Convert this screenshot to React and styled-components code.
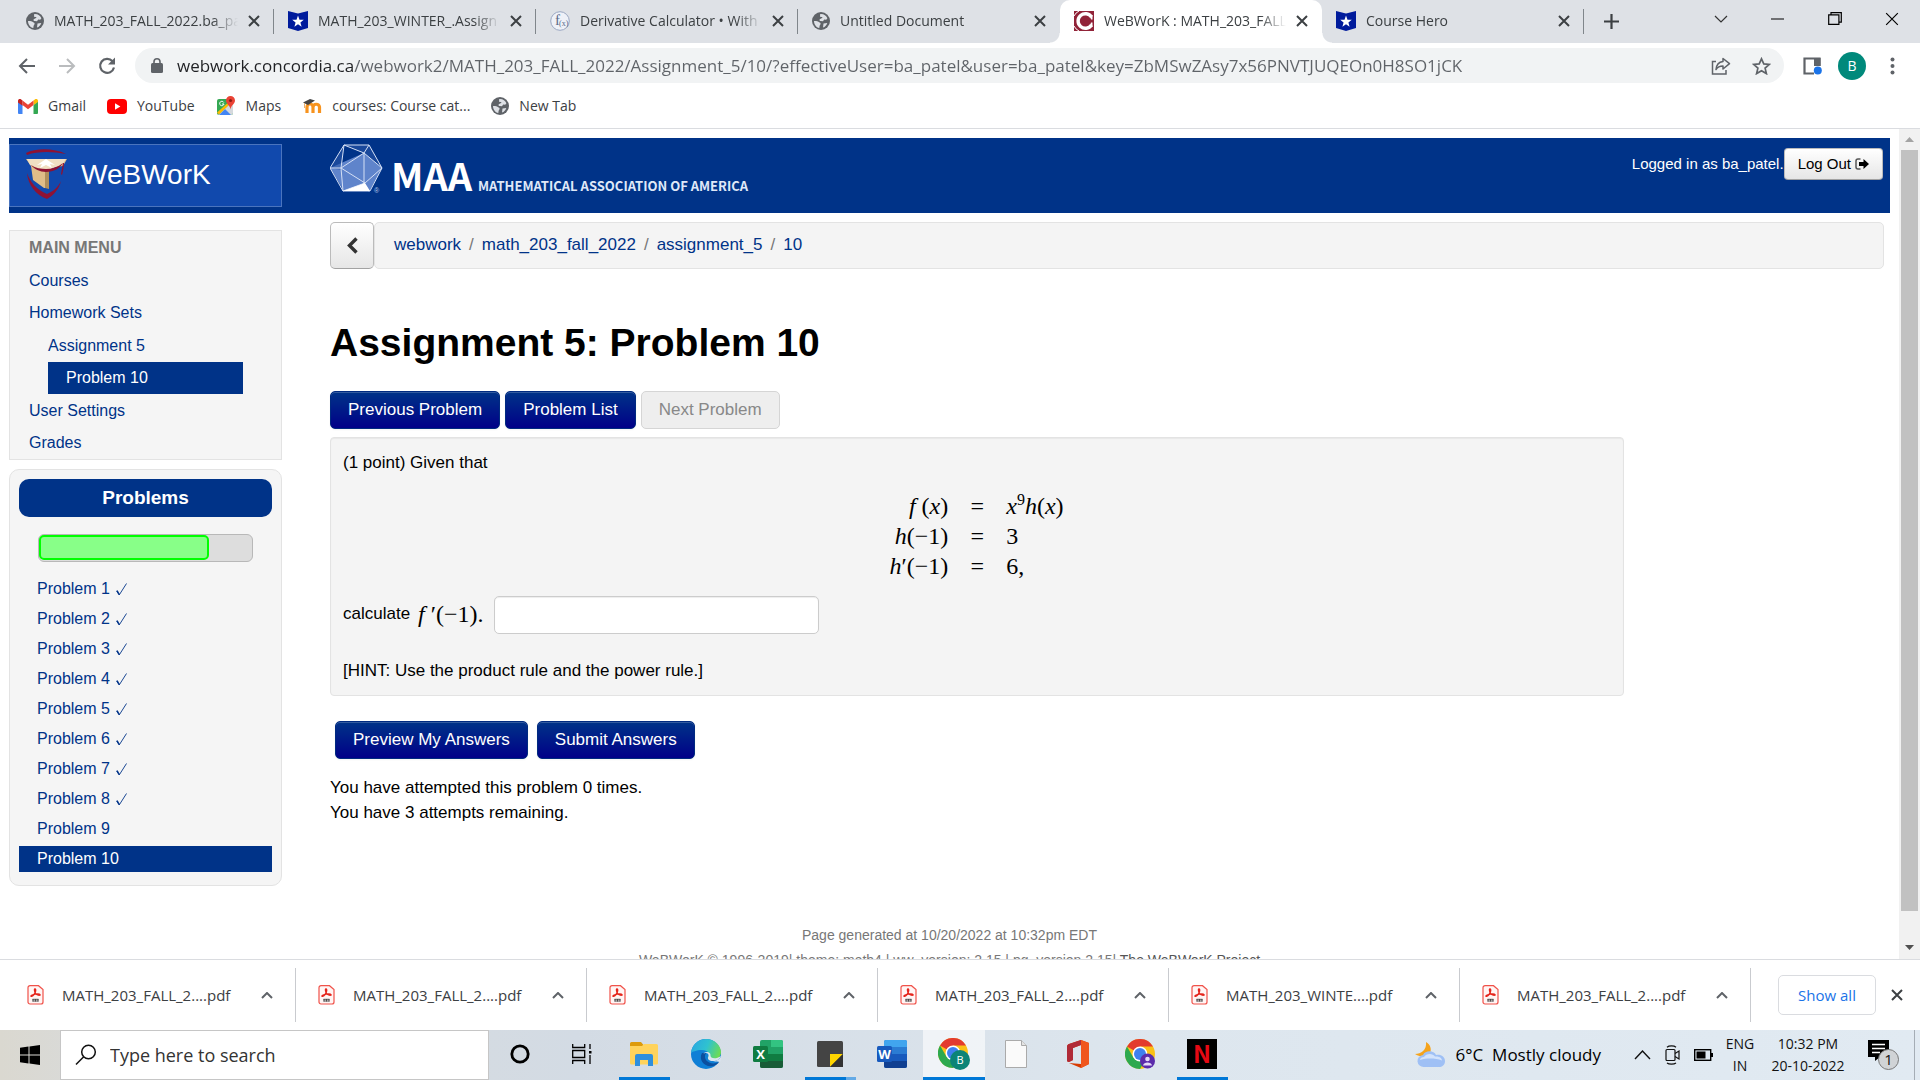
import React from "react";
import styled, { createGlobalStyle } from "styled-components";

const UI = `"Open Sans", "Noto Sans", sans-serif`;
const ARIAL = `"Liberation Sans", Arial, sans-serif`;
const SERIF = `"Liberation Serif", "Times New Roman", serif`;
const SLIM = `"Noto Sans CJK SC", "Noto Sans", sans-serif`;
const NAVY = "#003388";

const GlobalStyle = createGlobalStyle`
  *, *::before, *::after { box-sizing: border-box; }
  html, body, #root { height: 100%; margin: 0; }
  body { overflow: hidden; background: #fff; font-family: ${ARIAL}; color: #000; }
  button, input { font: inherit; margin: 0; }
  button { cursor: pointer; }
  a { text-decoration: none; color: inherit; }
  ul { list-style: none; margin: 0; padding: 0; }
  p, h1, h2 { margin: 0; }
  svg { display: block; flex: none; }
`;

const Desktop = styled.div`
  height: 100vh;
  display: flex;
  flex-direction: column;
`;

const IconButton = styled.button`
  border: 0;
  padding: 0;
  background: none;
  display: flex;
  align-items: center;
  justify-content: center;
  flex: none;
  width: ${(p) => p.$w || 40}px;
  height: ${(p) => p.$h || 36}px;
  color: ${(p) => p.$color || "#5f6368"};
`;

/* ---------- Tab strip ---------- */

const TabStrip = styled.div`
  height: 43px;
  flex: none;
  display: flex;
  background: #dee1e6;
  padding-left: 12px;
`;

const Tab = styled.div`
  width: 262px;
  display: flex;
  align-items: center;
  padding: 0 14px 2px;
  gap: 10px;
  position: relative;
  font: 14px/20px ${UI};
  color: #3c4043;
  background: ${(p) => (p.$active ? "#fff" : "transparent")};
  border-radius: ${(p) => (p.$active ? "10px 10px 0 0" : "0")};
  &::before {
    content: "";
    display: ${(p) => (p.$active ? "block" : "none")};
    position: absolute;
    left: -10px;
    right: -10px;
    bottom: 0;
    height: 10px;
    background:
      radial-gradient(circle at 0 0, transparent 9px, #fff 10px) left / 10px 10px no-repeat,
      radial-gradient(circle at 100% 0, transparent 9px, #fff 10px) right / 10px 10px no-repeat;
  }
  &::after {
    content: "";
    position: absolute;
    right: 0;
    top: 9px;
    width: 1px;
    height: 25px;
    background: ${(p) => (p.$divider ? "#80868b" : "transparent")};
  }
`;

const TabTitle = styled.span`
  flex: 1;
  min-width: 0;
  overflow: hidden;
  white-space: nowrap;
  mask-image: linear-gradient(to right, #000 calc(100% - 26px), transparent);
`;

const WindowControls = styled.div`
  margin-left: auto;
  display: flex;
  align-items: center;
  height: 37px;
`;

/* ---------- Toolbar ---------- */

const Toolbar = styled.div`
  height: 45px;
  flex: none;
  display: flex;
  align-items: center;
  padding: 0 8px 0 7px;
`;

const UrlBar = styled.div`
  flex: 1;
  height: 35px;
  margin: 0 8px;
  border-radius: 18px;
  background: #f1f3f4;
  display: flex;
  align-items: center;
  padding: 0 3px 0 16px;
  gap: 14px;
`;

const UrlInput = styled.input`
  flex: 1;
  min-width: 0;
  border: 0;
  padding: 0;
  outline: 0;
  font: 17px/24px ${UI};
  color: transparent;
  background: linear-gradient(to right, #202124 ${(p) => p.$host}px, #5f6368 ${(p) => p.$host}px);
  background-clip: text;
`;

const UrlActions = styled.div`
  display: flex;
`;

const Avatar = styled.span`
  width: 28px;
  height: 28px;
  border-radius: 50%;
  background: #00897b;
  color: #fff;
  font: 14px/28px ${UI};
  text-align: center;
`;

const BookmarkBar = styled.nav`
  height: 41px;
  flex: none;
  display: flex;
  align-items: center;
  padding: 0 18px 4px;
  gap: 21px;
  border-bottom: 1px solid #dadce0;
  font: 14px/20px ${UI};
  color: #3c4043;
`;

const Bookmark = styled.a`
  display: flex;
  align-items: center;
  gap: 10px;
`;

/* ---------- Page ---------- */

const Viewport = styled.div`
  flex: 1;
  min-height: 0;
  display: flex;
  overflow: hidden;
`;

const Page = styled.div`
  flex: 1;
  min-width: 0;
  padding: 9px 9px 0;
`;

const Scrollbar = styled.div`
  width: 21px;
  flex: none;
  background: #f1f1f1;
  display: flex;
  flex-direction: column;
  align-items: center;
  padding: 8px 0 9px;
  gap: 8px;
`;

const Thumb = styled.div`
  width: 17px;
  flex: 1;
  margin-bottom: 26px;
  background: #c1c1c1;
`;

const Columns = styled.div`
  display: grid;
  grid-template-columns: 273px minmax(0, 1fr);
  column-gap: 48px;
  align-items: start;
`;

const Banner = styled(Columns).attrs({ as: "header" })`
  background: ${NAVY};
  padding: 6px 0;
`;

const Brand = styled.a`
  height: 63px;
  display: flex;
  align-items: center;
  padding: 0 0 2px 16px;
  gap: 14px;
  background: #1149ad;
  border: 1px solid #4a74be;
  color: #fff;
  font: 28px/36px ${ARIAL};
`;

const BannerRight = styled.div`
  display: flex;
  justify-content: space-between;
  align-items: flex-start;
  padding-right: 7px;
`;

const MaaLink = styled.a`
  display: flex;
`;

const Session = styled.div`
  display: flex;
  align-items: center;
  padding-top: 4px;
  color: #fff;
  font: 15px/20px ${ARIAL};
`;

const LogOut = styled.a`
  display: flex;
  align-items: center;
  gap: 4px;
  height: 32px;
  padding: 0 13px;
  border: 1px solid #bbb;
  border-bottom-color: #a2a2a2;
  border-radius: 4px;
  background: linear-gradient(#fff, #e6e6e6);
  color: #000;
`;

const Sidebar = styled.aside`
  padding-top: 17px;
  display: flex;
  flex-direction: column;
  gap: 9px;
  font: 16px/20px ${ARIAL};
  color: ${NAVY};
`;

const MenuBox = styled.nav`
  background: #f5f5f5;
  border: 1px solid #e3e3e3;
  padding: 0 19px 0;
`;

const MenuHeading = styled.h2`
  font: bold 16px/34px ${ARIAL};
  color: #777;
`;

const SubMenu = styled.ul`
  padding: 1px 19px;
`;

const MenuLink = styled.a`
  display: block;
  line-height: 32px;
  background: ${(p) => (p.$active ? NAVY : "transparent")};
  color: ${(p) => (p.$active ? "#fff" : NAVY)};
  padding-left: ${(p) => (p.$active ? 18 : 0)}px;
`;

const ProblemBox = styled.nav`
  background: #f5f5f5;
  border: 1px solid #e3e3e3;
  border-radius: 10px;
  padding: 9px 9px 13px;
`;

const ProblemHeading = styled.h2`
  font: bold 19px/38px ${ARIAL};
  text-align: center;
  color: #fff;
  background: ${NAVY};
  border-radius: 10px;
`;

const Track = styled.div`
  height: 28px;
  margin: 17px 19px 14px;
  border: 1px solid #b8b8b8;
  border-radius: 6px;
  background: #ddd;
`;

const Fill = styled.div`
  height: 25px;
  border: 2px solid #00ff00;
  border-radius: 5px;
  background: #88ff88;
`;

const ProblemList = styled.ul`
  display: flex;
  flex-direction: column;
  gap: 4px;
`;

const ProblemLink = styled.a`
  display: flex;
  align-items: center;
  gap: 6px;
  line-height: 26px;
  padding-left: 18px;
  background: ${(p) => (p.$active ? NAVY : "transparent")};
  color: ${(p) => (p.$active ? "#fff" : NAVY)};
`;

const Main = styled.main`
  padding: 9px 6px 0 0;
  font: 17px/25px ${ARIAL};
`;

const Crumbs = styled.div`
  display: flex;
  height: 47px;
`;

const BackLink = styled.a`
  width: 44px;
  display: flex;
  align-items: center;
  justify-content: center;
  border: 1px solid #bbb;
  border-bottom-color: #a2a2a2;
  border-radius: 5px;
  background: linear-gradient(#fff, #e6e6e6);
  color: #333;
`;

const CrumbTrail = styled.nav`
  flex: 1;
  display: flex;
  align-items: center;
  gap: 8px;
  padding: 0 19px 2px;
  border: 1px solid #e3e3e3;
  border-radius: 5px;
  background: #f4f4f4;
  color: ${NAVY};
`;

const Slash = styled.span`
  color: #777;
`;

const Title = styled.h1`
  font: bold 39px/50px ${ARIAL};
  margin: 49px 0 23px;
`;

const ButtonRow = styled.div`
  display: flex;
  gap: ${(p) => p.$gap}px;
  margin: ${(p) => p.$margin || 0};
`;

const Button = styled.button`
  height: 38px;
  padding: 0 17px 2px;
  border: 1px solid #002a80;
  border-radius: 5px;
  background: linear-gradient(#003388, #000088);
  box-shadow: inset 0 1px 0 rgba(255, 255, 255, 0.2), 0 1px 2px rgba(0, 0, 0, 0.05);
  color: #fff;
  &:disabled {
    background: #eee;
    border-color: #d5d5d5;
    color: #888;
    box-shadow: none;
  }
`;

const ProblemPanel = styled.section`
  width: 83.3%;
  margin-top: 8px;
  padding: 12px;
  border: 1px solid #e3e3e3;
  border-radius: 4px;
  background: #f4f4f4;
  box-shadow: inset 0 1px 1px rgba(0, 0, 0, 0.05);
`;

const Equations = styled.div`
  display: grid;
  grid-template-columns: 1fr 18px 1fr;
  column-gap: 20px;
  margin: 16px 0 15px;
  font: 24px/30px ${SERIF};
  & > :nth-child(3n + 1) { text-align: right; }
  & > :nth-child(3n + 2) { text-align: center; }
`;

const Inline = styled.span`
  padding-bottom: 3px;
  font: 24px/26px ${SERIF};
`;

const Sup = styled.sup`
  font-size: 16px;
  line-height: 0;
`;

const AnswerLine = styled.label`
  display: flex;
  align-items: center;
  gap: 8px;
`;

const AnswerText = styled.span`
  padding-bottom: 3px;
`;

const AnswerInput = styled.input`
  width: 325px;
  height: 38px;
  margin-left: 2px;
  padding: 0 8px;
  border: 1px solid #ccc;
  border-radius: 5px;
  background: #fff;
  box-shadow: inset 0 1px 1px rgba(0, 0, 0, 0.075);
`;

const Hint = styled.p`
  margin-top: 24px;
`;

const Footer = styled.footer`
  margin-top: 37px;
  font: 14px/25px ${ARIAL};
  color: #777;
  text-align: center;
  a { color: #555; }
`;

/* ---------- Downloads shelf ---------- */

const Shelf = styled.div`
  height: 71px;
  flex: none;
  display: flex;
  align-items: center;
  padding: 0 2px 0 5px;
  border-top: 1px solid #dadce0;
  background: #fff;
  font: 15px/20px ${UI};
  color: #3c4043;
`;

const Download = styled.div`
  flex: 0 1 291px;
  height: 54px;
  display: flex;
  align-items: center;
  padding: 0 16px 0 22px;
  border-right: 1px solid #c9cbcf;
`;

const FileName = styled.a`
  flex: 1;
  padding-left: 18px;
  white-space: nowrap;
`;

const ShowAll = styled.button`
  margin-left: auto;
  width: 98px;
  height: 40px;
  border: 1px solid #dadce0;
  border-radius: 5px;
  background: #fff;
  color: #1a73e8;
`;

/* ---------- Taskbar ---------- */

const Taskbar = styled.div`
  height: 50px;
  flex: none;
  display: flex;
  background: linear-gradient(to right, #dad8d0, #d9dad8 4%, #d3dbe4 30%, #dde6ee 60%, #e1eaf2);
  font: 15px/24px ${UI};
  color: #111;
`;

const SearchBox = styled.label`
  width: 429px;
  display: flex;
  align-items: center;
  gap: 13px;
  padding-left: 14px;
  background: #fff;
  border: 1px solid #c6c6c6;
`;

const SearchInput = styled.input`
  flex: 1;
  border: 0;
  outline: 0;
  padding: 0;
  background: none;
  font: 18px/24px ${UI};
  &::placeholder { color: #333; opacity: 1; }
`;

const TaskButton = styled(IconButton)`
  width: 62px;
  height: 50px;
  padding-bottom: ${(p) => (p.$open ? 0 : 3)}px;
  background: ${(p) => (p.$active ? "rgba(255,255,255,0.6)" : "none")};
  flex-direction: column;
`;

const TaskIcon = styled.span`
  flex: 1;
  display: flex;
  align-items: center;
`;

const OpenMark = styled.span`
  width: ${(p) => (p.$wide ? "100%" : "51px")};
  height: 3px;
  background: ${(p) => (p.$stacked ? "linear-gradient(to right, #0078d7 80%, #64aae6 80%)" : "#0078d7")};
`;

const Tray = styled.div`
  margin-left: auto;
  display: flex;
  align-items: center;
`;

const Weather = styled.button`
  display: flex;
  align-items: center;
  gap: 11px;
  border: 0;
  padding: 0 25px 0 0;
  background: none;
  font: 17px/24px ${UI};
  white-space: pre;
`;

const Stack = styled.div`
  width: ${(p) => p.$w}px;
  text-align: center;
  font: 14px/22px ${UI};
`;

const Peek = styled.div`
  align-self: stretch;
  width: 6px;
  border-left: 1px solid #a5adb5;
`;

/* ---------- Drawings ---------- */

const Close = ({ size = 12, color = "#3c4043", w = 2 }) => (
  <svg width={size} height={size} viewBox="0 0 12 12" stroke={color} strokeWidth={w} fill="none">
    <path d="M1 1L11 11M11 1L1 11" />
  </svg>
);

const Globe = () => (
  <svg width="18" height="18" viewBox="0 0 18 18">
    <circle cx="9" cy="9" r="9" fill="#5f6368" />
    <path d="M2 9c1 0 3.200 0 4 .6 1 .8 2.400.9 2.600 1.900.2 1.200-1 1.500-1.100 2.900L7.300 16C4.200 15.400 2 12.500 2 9zM8.200 2c3.600-.3 6 1.500 7.200 4.300l-1.200 1.400-2-.2-1.200 1.800-2.300-.2c-1-.1-1.500-1-1-1.900l2.300-1.100c.8-.5.5-1-.2-1.200L8 4.800zM11.500 11.500l3.800-.6c-.6 2-2.200 3.900-4.300 4.700z" fill="#dee1e6" />
  </svg>
);

const HeroStar = () => (
  <svg width="20" height="20" viewBox="0 0 20 20">
    <path d="M0 0l10 2.500L20 0v17l-10 3-10-3z" fill="#001b9c" />
    <path d="M10 4.500l1.500 4.200 4.300.1-3.400 2.700 1.200 4.200-3.600-2.500-3.600 2.500 1.200-4.200-3.400-2.700 4.300-.1z" fill="#fff" />
  </svg>
);

const FxIcon = () => (
  <svg width="20" height="20" viewBox="0 0 20 20">
    <circle cx="10" cy="10" r="9.300" fill="#eef1f8" stroke="#9aa7c2" />
    <text x="5" y="14" fontFamily="Liberation Serif" fontSize="15" fill="#5a6a88">f</text>
    <text x="9" y="15" fontFamily="Liberation Serif" fontSize="8" fill="#5a6a88">(x)</text>
  </svg>
);

const ConcordiaIcon = () => (
  <svg width="20" height="20" viewBox="0 0 20 20">
    <rect width="20" height="20" fill="#912338" />
    <path d="M17.500 6A7.300 7.300 0 1 0 17.500 14" fill="none" stroke="#fff" strokeWidth="3.400" />
    <path d="M15.500 4h3v4.500h-1.500zM15.500 16h3v-4.500h-1.500z" fill="#fff" />
    <path d="M0 5A11 11 0 0 1 5 0M0 15a11 11 0 0 0 5 5" stroke="#fff" fill="none" strokeWidth="1" />
  </svg>
);

const Gmail = () => (
  <svg width="20" height="15" viewBox="0 0 20 15">
    <path d="M0 2v12a1 1 0 0 0 1 1h3.500V6z" fill="#4285f4" />
    <path d="M20 2v12a1 1 0 0 1-1 1h-3.500V6z" fill="#34a853" />
    <path d="M15.500 1.500V6L20 3V2c0-2-2-2.500-3.200-1.500z" fill="#fbbc04" />
    <path d="M4.500 6V1.500L10 5.700l5.500-4.200V6L10 10.200z" fill="#ea4335" />
    <path d="M0 2v1.500L4.500 6.800V1.500L3.200.5C2-.5 0 0 0 2z" fill="#c5221f" />
  </svg>
);

const YouTube = () => (
  <svg width="20" height="15" viewBox="0 0 20 15">
    <rect width="20" height="15" rx="4" fill="#f00" />
    <path d="M8 4.300v6.400l5.400-3.200z" fill="#fff" />
  </svg>
);

const Maps = () => (
  <svg width="20" height="20" viewBox="0 0 20 20">
    <rect x="1" y="3" width="16" height="16" rx="2" fill="#34a853" />
    <path d="M2 19L17 5v12a2 2 0 0 1-2 2z" fill="#d5d9dd" />
    <path d="M3 19l6-6 6 6z" fill="#4285f4" />
    <path d="M1 16.500L15 4l1.500 1.500L3 18.500z" fill="#fbbc04" />
    <path d="M14.500 0a4.500 4.500 0 0 0-4.500 4.500c0 3.500 4 4.500 4.500 9 .5-4.500 4.500-5.500 4.500-9A4.500 4.500 0 0 0 14.500 0z" fill="#ea4335" />
    <circle cx="14.500" cy="4.500" r="1.600" fill="#8f1d14" />
    <path d="M7.800 6.500a2.200 2.200 0 1 0 .2 1.500H6" stroke="#fff" strokeWidth="1" fill="none" />
  </svg>
);

const Moodle = () => (
  <svg width="20" height="16" viewBox="0 0 20 16">
    <path d="M5 15V9a3 3 0 0 1 6 0v6M11 9a3.300 3.300 0 0 1 6.500 0v6" fill="none" stroke="#f7931e" strokeWidth="3.200" />
    <path d="M1 4.500L8 1l5 1.500L6 7z" fill="#444" />
    <path d="M2.500 5v5" stroke="#e8b070" strokeWidth="1" />
  </svg>
);

const BackArrow = ({ color = "#5f6368", flip }) => (
  <svg width="18" height="16" viewBox="0 0 18 16" fill="none" stroke={color} strokeWidth="2">
    <path d={flip ? "M1 8h15M9 1l7 7-7 7" : "M17 8H2M9 1L2 8l7 7"} />
  </svg>
);

const Reload = () => (
  <svg width="20" height="18" viewBox="0 0 20 18">
    <path d="M15.500 4.200A7 7 0 1 0 17 10.500" fill="none" stroke="#5f6368" strokeWidth="2.200" />
    <path d="M18 .5v7h-7z" fill="#5f6368" />
  </svg>
);

const Lock = () => (
  <svg width="12" height="15" viewBox="0 0 12 15">
    <rect y="5" width="12" height="10" rx="1.500" fill="#5f6368" />
    <path d="M3 6V3.800a3 3 0 0 1 6 0V6" fill="none" stroke="#5f6368" strokeWidth="1.600" />
  </svg>
);

const Share = () => (
  <svg width="20" height="18" viewBox="0 0 20 18" fill="none" stroke="#5f6368" strokeWidth="1.500">
    <path d="M5 4.500H1.500v12.500H15v-4" />
    <path d="M12 1.500l6.500 5.200L12 12V9c-3.500 0-5.500 1-7 3.500.4-4.500 2.800-7.500 7-8z" strokeLinejoin="round" />
  </svg>
);

const Star = () => (
  <svg width="19" height="18" viewBox="0 0 19 18" fill="none" stroke="#5f6368" strokeWidth="1.700">
    <path d="M9.500 1.800l2.300 5.100 5.500.5-4.200 3.700 1.300 5.500-4.900-2.900-4.900 2.900 1.300-5.500L1.700 7.400l5.500-.5z" />
  </svg>
);

const SidePanel = () => (
  <svg width="19" height="18" viewBox="0 0 19 18">
    <path d="M1.500 1.500h15v15h-15z" fill="#fff" stroke="#5f6368" strokeWidth="2.200" />
    <rect x="11" y="1" width="6.500" height="8" fill="#5f6368" />
    <rect x="11" y="9" width="8" height="9" fill="#fff" />
    <circle cx="14.800" cy="13.500" r="4" fill="#1a73e8" />
  </svg>
);

const Dots = () => (
  <svg width="5" height="18" viewBox="0 0 5 18" fill="#5f6368">
    <circle cx="2.500" cy="2.500" r="2" />
    <circle cx="2.500" cy="9" r="2" />
    <circle cx="2.500" cy="15.500" r="2" />
  </svg>
);

const Chevron = ({ w = 12, h = 7, up, stroke = 2, color = "#5f6368" }) => (
  <svg width={w} height={h} viewBox={`0 0 ${w} ${h}`} fill="none" stroke={color} strokeWidth={stroke}>
    <path d={up ? `M1 ${h - 1}L${w / 2} 1L${w - 1} ${h - 1}` : `M1 1L${w / 2} ${h - 1}L${w - 1} 1`} />
  </svg>
);

const Shield = () => (
  <svg width="41" height="51" viewBox="0 0 41 51">
    <path d="M0 4C10-1 28-1 40 5 27 2.500 12 2 1 6z" fill="#8f1233" />
    <path d="M0 10h41l-4 7-14 2v20l-5 0-11-8-2-14z" fill="#dfbd88" />
    <path d="M1 10h39l-3 5-17 7L4 16z" fill="#f0dfc2" />
    <path d="M20 10l-9 6 5-1-2 4 6-3 6 3-2-4 5 1z" fill="#fff" />
    <path d="M19 22l4-2v20l-4-1z" fill="#b08f5c" />
    <path d="M5 16c4 3 10 4 15 4 6 0 12-2 17-6-3 5-9 9-17 9-6 0-12-3-15-7z" fill="#8f1233" />
    <path d="M37 14l-2 11 1 1c1-4 2-8 2-12z" fill="#8f1233" />
    <path d="M1 24c3 9 10 17 20 21 7-3 11-7 14-13-2 8-7 14-14 18C10 46 2 36 1 24z" fill="#8f1233" />
  </svg>
);

const MaaLogo = () => (
  <svg width="440" height="52" viewBox="0 0 440 52">
    <path d="M0 24l34-15 18 15-13 24-6-8-19 7z" fill="#5f84cb" />
    <path d="M14 1h26l-6 8zM0 24L14 1 11 26zM40 1l12 23L34 9z" fill="#2a57a8" opacity="0.600" />
    <path d="M14 1h25l13 23-12 23H13L0 24zM14 1l20 8 5-8M34 9l18 15M34 9L11 24 14 1M0 24h11l2 23M11 24l24 15 17-15M34 9v30l5 8M35 39l-22 8" fill="none" stroke="#d5e0f5" strokeWidth="1" />
    <path d="M13 47l22-8 5 8z" fill="#fff" />
    <text x="44" y="49" fontFamily="Liberation Sans" fontSize="7" fill="#b9c9ea">®</text>
    <text x="61" y="47" fontFamily={SLIM} fontWeight="bold" fontSize="38" fill="#fff">MAA</text>
    <text x="148" y="47" fontFamily={SLIM} fontWeight="bold" fontSize="13" fill="#dfe8f8">MATHEMATICAL ASSOCIATION OF AMERICA</text>
  </svg>
);

const SignOut = () => (
  <svg width="14" height="12" viewBox="0 0 14 12">
    <path d="M5.500 1H3a2 2 0 0 0-2 2v6a2 2 0 0 0 2 2h2.500" fill="none" stroke="#555" strokeWidth="1.500" />
    <path d="M4 4h4.500V1L14 6l-5.500 5V8H4z" fill="#000" />
  </svg>
);

const BackChevron = () => (
  <svg width="11" height="17" viewBox="0 0 11 17" fill="none" stroke="#333" strokeWidth="3.400">
    <path d="M9.500 1.500L2.500 8.500l7 7" />
  </svg>
);

const Check = () => (
  <svg width="11" height="13" viewBox="0 0 11 13" fill="none" stroke={NAVY}>
    <path d="M.5 8L3.200 12 10.500.5" strokeWidth="0.900" />
    <path d="M1 7.500L3.300 11.500" strokeWidth="1.400" />
  </svg>
);

const Arrow = ({ down }) => (
  <svg width="9" height="5" viewBox="0 0 9 5">
    <path d={down ? "M0 0h9L4.500 5z" : "M0 5h9L4.500 0z"} fill={down ? "#505050" : "#a3a3a3"} />
  </svg>
);

const Pdf = () => (
  <svg width="17" height="20" viewBox="0 0 17 20">
    <path d="M3 .7h8.500L16 4.500V17a2 2 0 0 1-2 2H3a2 2 0 0 1-2-2V2.700a2 2 0 0 1 2-2z" fill="#fff5f4" stroke="#f0524a" strokeWidth="1.200" />
    <path d="M8 4c1.500 0 .5 3.500-1 5.500S3.500 12 4 10.800 12 8 13 9.500 9 10.500 8 7.500 7.400 4 8 4z" fill="none" stroke="#e5251c" strokeWidth="1.300" />
    <path d="M5.500 14.300h6M5.500 16h6M6 14v2.500M8.500 14v2.500M11 14v2.500" stroke="#444" strokeWidth="0.900" />
  </svg>
);

const WindowsLogo = () => (
  <svg width="20" height="20" viewBox="0 0 20 20" fill="#000">
    <path d="M0 2.800l8.500-1.200v8H0zM9.500 1.500L20 0v9.600H9.500zM0 10.500h8.500v8L0 17.300zM9.500 10.500H20V20L9.500 18.600z" />
  </svg>
);

const Magnifier = () => (
  <svg width="22" height="22" viewBox="0 0 22 22" fill="none" stroke="#111" strokeWidth="1.500">
    <circle cx="13.500" cy="8" r="6.800" />
    <path d="M8.700 12.800L1 20.500" />
  </svg>
);

const Cortana = () => (
  <svg width="20" height="20" viewBox="0 0 20 20">
    <circle cx="10" cy="10" r="8.200" fill="none" stroke="#000" strokeWidth="2.800" />
  </svg>
);

const TaskView = () => (
  <svg width="20" height="20" viewBox="0 0 20 20" fill="none" stroke="#000" strokeWidth="1.300">
    <path d="M.7 0v3.500h12V0M.7 20v-3.500h12V20M.7 6.500h12v7H.700zM18 0v5M18 11v9" />
    <rect x="17" y="7" width="2.500" height="2.500" fill="#000" stroke="none" />
  </svg>
);

const Explorer = () => (
  <svg width="28" height="24" viewBox="0 0 28 24">
    <path d="M0 1.500A1.500 1.500 0 0 1 1.500 0H11l2.500 3-2 3H0z" fill="#dd9b0c" />
    <path d="M0 4h12l2-2h12.500A1.500 1.500 0 0 1 28 3.500V21a1.500 1.500 0 0 1-1.500 1.500h-25A1.500 1.500 0 0 1 0 21z" fill="#ffd35c" />
    <path d="M5 24V14a2 2 0 0 1 2-2h14a2 2 0 0 1 2 2v10h-5v-6h-8v6z" fill="#2f8fdd" />
  </svg>
);

const Edge = () => (
  <svg width="30" height="30" viewBox="0 0 30 30">
    <defs>
      <linearGradient id="edgeTop" x1="0" x2="1" y1="0.300" y2="0.600">
        <stop offset="0" stopColor="#2aa9e0" />
        <stop offset="0.500" stopColor="#2fc2d0" />
        <stop offset="1" stopColor="#6fdd4f" />
      </linearGradient>
    </defs>
    <circle cx="15" cy="15" r="15" fill="#0f7fd6" />
    <path d="M0 14C1 5 8 0 15 0c9 0 15 7 15 13 0 5-4 8-8 8-5 0-6-2-4.500-4 1-2-.5-6-6.500-6S1 13 0 14z" fill="url(#edgeTop)" />
    <path d="M11 14c-4 7 3 15 11 13 3-.6 5-2.500 6-4-4 2-9 2-12-1s-2-6-1-8z" fill="#0c4f9e" />
    <path d="M30 17c-1 3-4 5-8 5s-6-2-4.500-4.500c1-3-3-5-5.500-2 2-4 8-3 7.500 1-.3 2 4 5 10.500.5z" fill="#dbe5ee" />
    <path d="M30 17.500c-1 2.500-4 4.500-8 4.500 3 1 6 .5 7 1 .8-1.800 1.200-4 1-5.500z" fill="#dbe5ee" />
  </svg>
);

const Excel = () => (
  <svg width="30" height="28" viewBox="0 0 30 28">
    <rect x="7" width="23" height="28" rx="2" fill="#21a366" />
    <path d="M18 0h10a2 2 0 0 1 2 2v5H18z" fill="#33c481" />
    <path d="M7 14h11v14H9a2 2 0 0 1-2-2z" fill="#185c37" />
    <path d="M18 14h12v7H18zM7 14h11v7H7z" fill="#107c41" />
    <path d="M18 21h12v5a2 2 0 0 1-2 2H18z" fill="#185c37" />
    <rect y="6" width="15" height="16" rx="1.500" fill="#107c41" />
    <text x="7.500" y="19" textAnchor="middle" fontFamily="Open Sans" fontWeight="bold" fontSize="13" fill="#fff">X</text>
  </svg>
);

const Word = () => (
  <svg width="30" height="28" viewBox="0 0 30 28">
    <rect x="7" width="23" height="28" rx="2" fill="#2b7cd3" />
    <path d="M9 0h19a2 2 0 0 1 2 2v5H7V2a2 2 0 0 1 2-2z" fill="#41a5ee" />
    <rect x="7" y="14" width="23" height="7" fill="#185abd" />
    <path d="M7 21h23v5a2 2 0 0 1-2 2H9a2 2 0 0 1-2-2z" fill="#103f91" />
    <rect y="6" width="15" height="16" rx="1.500" fill="#185abd" />
    <text x="7.500" y="19" textAnchor="middle" fontFamily="Open Sans" fontWeight="bold" fontSize="13" fill="#fff">W</text>
  </svg>
);

const Sticky = () => (
  <svg width="26" height="26" viewBox="0 0 26 26">
    <rect width="26" height="26" rx="1.500" fill="#444" />
    <path d="M13 13h13L13 26z" fill="#ffd500" />
    <path d="M13 26L26 13v13z" fill="#333" />
  </svg>
);

const ChromeBase = () => (
  <g>
    <circle cx="15" cy="15" r="15" fill="#fbc116" />
    <path d="M15 15L2 7.500A15 15 0 0 1 28 7.500H15z" fill="#e33b2e" />
    <path d="M2 7.500A15 15 0 0 0 15 30l6.500-11.300L15 15 8.500 18.700z" fill="#2da94f" />
    <circle cx="15" cy="15" r="7.500" fill="#fff" />
    <circle cx="15" cy="15" r="6" fill="#3f80ee" />
  </g>
);

const ChromeProfile = () => (
  <svg width="32" height="32" viewBox="0 0 32 32">
    <ChromeBase />
    <circle cx="22" cy="22" r="10" fill="#0b8477" />
    <text x="22" y="26" textAnchor="middle" fontFamily="Open Sans" fontSize="11" fill="#fff">B</text>
  </svg>
);

const ChromeGuest = () => (
  <svg width="30" height="30" viewBox="0 0 30 30">
    <ChromeBase />
    <circle cx="22.500" cy="22" r="7.500" fill="#5b2bab" />
    <circle cx="22.500" cy="20" r="2.300" fill="#e3d8f7" />
    <path d="M18 26.500c.5-4 8.500-4 9 0z" fill="#e3d8f7" />
  </svg>
);

const Doc = () => (
  <svg width="22" height="28" viewBox="0 0 22 28">
    <path d="M.5.500h16l5 5v22H.5z" fill="#fafafa" stroke="#aaa" />
    <path d="M16.500.500v5h5" fill="#e4e4e4" stroke="#aaa" />
  </svg>
);

const Office = () => (
  <svg width="22" height="28" viewBox="0 0 22 28">
    <path d="M14 0l8 3v21l-8 4-12-5 12 1V5L6 8v12l-4 2c-1.500 0-2-1-2-2V7c0-1.500.5-2.500 2-3z" fill="#d83b01" />
    <path d="M14 0v5L6 8v12l-4 2c-1.500 0-2-1-2-2V7c0-1.500.5-2.500 2-3z" fill="#b02a37" />
    <path d="M14 0l8 3v21l-8 4z" fill="#f0561d" />
  </svg>
);

const Netflix = () => (
  <svg width="30" height="30" viewBox="0 0 30 30">
    <rect width="30" height="30" fill="#000" />
    <text x="15" y="24" textAnchor="middle" fontFamily={SLIM} fontWeight="bold" fontSize="24" fill="#e50914">N</text>
  </svg>
);

const NightCloud = () => (
  <svg width="30" height="26" viewBox="0 0 30 26">
    <path d="M11 0c4 2 6 7 4 11s-8 5-15 1c6 0 12-4 11-12z" fill="#f5a31c" />
    <path d="M9 25a6 6 0 0 1-1-12c2-5 11-5 13 0 5-1 9 2 9 6s-3 6-6 6z" fill="#9fc0f5" />
    <path d="M9 15c2-4 9-4 11-.5 5-.5 7 2 7 4C20 16 12 16 5 18c0-2 2-3 4-3z" fill="#d3e3fc" />
  </svg>
);

const Camera = () => (
  <svg width="16" height="20" viewBox="0 0 16 20" fill="none" stroke="#111" strokeWidth="1.200">
    <rect x="1" y="4.500" width="9" height="11" rx="1" />
    <path d="M10 8.500l4-2.500v8l-4-2.500M2 2.200C4 .5 9 .500 11 2.200M2 18c2 1.500 7 1.500 9 0" />
  </svg>
);

const Battery = () => (
  <svg width="19" height="12" viewBox="0 0 19 12">
    <rect x="0.700" y="0.700" width="16" height="10.600" fill="none" stroke="#000" strokeWidth="1.400" />
    <rect x="2.500" y="2.500" width="9" height="7" fill="#000" />
    <rect x="17" y="4" width="2" height="4" fill="#000" />
  </svg>
);

const Notice = () => (
  <svg width="32" height="30" viewBox="0 0 32 30">
    <path d="M0 0h21v17h-9l-5 4v-4H0z" fill="#000" />
    <path d="M4 4.500h13M4 8.500h13M4 12.500h8" stroke="#fff" strokeWidth="1.300" />
    <circle cx="20.500" cy="19.500" r="10" fill="#d0d3d6" stroke="#777" />
    <text x="20.500" y="25" textAnchor="middle" fontFamily="Open Sans" fontSize="15" fill="#111">1</text>
  </svg>
);

const Minimize = () => (
  <svg width="13" height="2" viewBox="0 0 13 2"><rect width="13" height="1" y="0.500" fill="#000" /></svg>
);

const Restore = () => (
  <svg width="14" height="13" viewBox="0 0 14 13" fill="none" stroke="#000" strokeWidth="1.200">
    <path d="M.7 2.800h10.200v9.500H.700zM3 2.500V.7h10.300v9.500H11.200" />
  </svg>
);

const Plus = () => (
  <svg width="15" height="15" viewBox="0 0 15 15" stroke="#3c4043" strokeWidth="2.200"><path d="M7.500 0v15M0 7.500h15" /></svg>
);

/* ---------- Data ---------- */

const tabs = [
  { icon: <Globe />, title: "MATH_203_FALL_2022.ba_pa", divider: true },
  { icon: <HeroStar />, title: "MATH_203_WINTER_.Assign", divider: true },
  { icon: <FxIcon />, title: "Derivative Calculator • With", divider: true },
  { icon: <Globe />, title: "Untitled Document" },
  { icon: <ConcordiaIcon />, title: "WeBWorK : MATH_203_FALL", active: true },
  { icon: <HeroStar />, title: "Course Hero", divider: true },
];

const bookmarks = [
  [<Gmail />, "Gmail"],
  [<YouTube />, "YouTube"],
  [<Maps />, "Maps"],
  [<Moodle />, "courses: Course cat..."],
  [<Globe />, "New Tab"],
];

const crumbs = ["webwork", "math_203_fall_2022", "assignment_5", "10"];
const solved = 8;
const problems = Array.from({ length: 10 }, (_, i) => i + 1);

const downloads = [
  "MATH_203_FALL_2....pdf",
  "MATH_203_FALL_2....pdf",
  "MATH_203_FALL_2....pdf",
  "MATH_203_FALL_2....pdf",
  "MATH_203_WINTE....pdf",
  "MATH_203_FALL_2....pdf",
];

const tasks = [
  { name: "Cortana", icon: <Cortana /> },
  { name: "Task view", icon: <TaskView /> },
  { name: "File Explorer", icon: <Explorer />, open: true },
  { name: "Edge", icon: <Edge /> },
  { name: "Excel", icon: <Excel /> },
  { name: "Sticky Notes", icon: <Sticky />, open: true, stacked: true },
  { name: "Word", icon: <Word /> },
  { name: "Chrome", icon: <ChromeProfile />, open: true, active: true },
  { name: "Document", icon: <Doc /> },
  { name: "Office", icon: <Office /> },
  { name: "Chrome guest", icon: <ChromeGuest /> },
  { name: "Netflix", icon: <Netflix />, open: true },
];

const Neg1 = () => <>(−1)</>;

export default function App() {
  return (
    <Desktop>
      <GlobalStyle />
      <TabStrip>
        {tabs.map((t, i) => (
          <Tab key={i} $active={t.active} $divider={t.divider}>
            {t.icon}
            <TabTitle>{t.title}</TabTitle>
            <IconButton $w={12} $h={20} aria-label="Close tab"><Close /></IconButton>
          </Tab>
        ))}
        <IconButton $w={54} $h={43} aria-label="New tab"><Plus /></IconButton>
        <WindowControls>
          <IconButton $w={57} aria-label="Search tabs"><Chevron w={14} h={8} stroke={1.2} color="#333" /></IconButton>
          <IconButton $w={57} aria-label="Minimize"><Minimize /></IconButton>
          <IconButton $w={57} aria-label="Restore"><Restore /></IconButton>
          <IconButton $w={57} aria-label="Close"><Close size={14} w={1} color="#000" /></IconButton>
        </WindowControls>
      </TabStrip>

      <Toolbar>
        <IconButton aria-label="Back"><BackArrow /></IconButton>
        <IconButton aria-label="Forward"><BackArrow flip color="#babcbe" /></IconButton>
        <IconButton aria-label="Reload"><Reload /></IconButton>
        <UrlBar>
          <Lock />
          <UrlInput
            aria-label="Address"
            $host={177}
            defaultValue="webwork.concordia.ca/webwork2/MATH_203_FALL_2022/Assignment_5/10/?effectiveUser=ba_patel&user=ba_patel&key=ZbMSwZAsy7x56PNVTJUQEOn0H8SO1jCK"
          />
          <UrlActions>
            <IconButton aria-label="Share"><Share /></IconButton>
            <IconButton aria-label="Bookmark"><Star /></IconButton>
          </UrlActions>
        </UrlBar>
        <IconButton aria-label="Side panel"><SidePanel /></IconButton>
        <IconButton aria-label="Profile"><Avatar>B</Avatar></IconButton>
        <IconButton aria-label="Menu"><Dots /></IconButton>
      </Toolbar>

      <BookmarkBar>
        {bookmarks.map(([icon, label]) => (
          <Bookmark key={label} href="#">{icon}{label}</Bookmark>
        ))}
      </BookmarkBar>

      <Viewport>
        <Page>
          <Banner>
            <Brand href="#"><Shield />WeBWorK</Brand>
            <BannerRight>
              <MaaLink href="#"><MaaLogo /></MaaLink>
              <Session>
                Logged in as ba_patel.
                <LogOut href="#">Log Out <SignOut /></LogOut>
              </Session>
            </BannerRight>
          </Banner>

          <Columns>
            <Sidebar>
              <MenuBox>
                <MenuHeading>MAIN MENU</MenuHeading>
                <ul>
                  <li><MenuLink href="#">Courses</MenuLink></li>
                  <li>
                    <MenuLink href="#">Homework Sets</MenuLink>
                    <SubMenu>
                      <li><MenuLink href="#">Assignment 5</MenuLink></li>
                      <li><MenuLink href="#" $active>Problem 10</MenuLink></li>
                    </SubMenu>
                  </li>
                  <li><MenuLink href="#">User Settings</MenuLink></li>
                  <li><MenuLink href="#">Grades</MenuLink></li>
                </ul>
              </MenuBox>
              <ProblemBox>
                <ProblemHeading>Problems</ProblemHeading>
                <Track role="progressbar" aria-valuenow={solved} aria-valuemax={problems.length}>
                  <Fill style={{ width: `${(solved / problems.length) * 100}%` }} />
                </Track>
                <ProblemList>
                  {problems.map((n) => (
                    <li key={n}>
                      <ProblemLink href="#" $active={n === 10}>
                        Problem {n}
                        {n <= solved && <Check />}
                      </ProblemLink>
                    </li>
                  ))}
                </ProblemList>
              </ProblemBox>
            </Sidebar>

            <Main>
              <Crumbs>
                <BackLink href="#" aria-label="Up"><BackChevron /></BackLink>
                <CrumbTrail>
                  {crumbs.map((c, i) => (
                    <React.Fragment key={c}>
                      {i > 0 && <Slash>/</Slash>}
                      <a href="#">{c}</a>
                    </React.Fragment>
                  ))}
                </CrumbTrail>
              </Crumbs>
              <Title>Assignment 5: Problem 10</Title>
              <ButtonRow $gap={5}>
                <Button>Previous Problem</Button>
                <Button>Problem List</Button>
                <Button disabled>Next Problem</Button>
              </ButtonRow>
              <ProblemPanel>
                <p>(1 point) Given that</p>
                <Equations>
                  <span><i>f</i> (<i>x</i>)</span><span>=</span><span><i>x</i><Sup>9</Sup><i>h</i>(<i>x</i>)</span>
                  <span><i>h</i><Neg1 /></span><span>=</span><span>3</span>
                  <span><i>h</i>′<Neg1 /></span><span>=</span><span>6,</span>
                </Equations>
                <AnswerLine>
                  <AnswerText>calculate</AnswerText>
                  <Inline><i>f</i> ′<Neg1 />.</Inline>
                  <AnswerInput type="text" />
                </AnswerLine>
                <Hint>[HINT: Use the product rule and the power rule.]</Hint>
              </ProblemPanel>
              <ButtonRow $gap={9} $margin="25px 5px 16px">
                <Button>Preview My Answers</Button>
                <Button>Submit Answers</Button>
              </ButtonRow>
              <p>You have attempted this problem 0 times.</p>
              <p>You have 3 attempts remaining.</p>
            </Main>
          </Columns>
          <Footer>
            <p>Page generated at 10/20/2022 at 10:32pm EDT</p>
            <p>WeBWorK © 1996-2019| theme: math4 | ww_version: 2.15 | pg_version 2.15| <a href="#">The WeBWorK Project</a></p>
          </Footer>
        </Page>
        <Scrollbar aria-hidden="true">
          <Arrow />
          <Thumb />
          <Arrow down />
        </Scrollbar>
      </Viewport>

      <Shelf>
        {downloads.map((name, i) => (
          <Download key={i}>
            <Pdf />
            <FileName href="#">{name}</FileName>
            <IconButton $w={24} aria-label="More actions"><Chevron up /></IconButton>
          </Download>
        ))}
        <ShowAll>Show all</ShowAll>
        <IconButton $w={42} aria-label="Close downloads"><Close /></IconButton>
      </Shelf>

      <Taskbar>
        <IconButton $w={60} $h={50} aria-label="Start"><WindowsLogo /></IconButton>
        <SearchBox>
          <Magnifier />
          <SearchInput aria-label="Search" placeholder="Type here to search" />
        </SearchBox>
        {tasks.map((t) => (
          <TaskButton key={t.name} aria-label={t.name} $open={t.open} $active={t.active}>
            <TaskIcon>{t.icon}</TaskIcon>
            {t.open && <OpenMark $wide={t.active} $stacked={t.stacked} />}
          </TaskButton>
        ))}
        <Tray>
          <Weather><NightCloud />{"6°C  Mostly cloudy"}</Weather>
          <IconButton $w={32} aria-label="Hidden icons"><Chevron up w={17} h={10} stroke={1.4} color="#111" /></IconButton>
          <IconButton $w={30} aria-label="Camera"><Camera /></IconButton>
          <IconButton $w={30} aria-label="Battery"><Battery /></IconButton>
          <Stack $w={44}>ENG<br />IN</Stack>
          <Stack $w={92}>10:32 PM<br />20-10-2022</Stack>
          <IconButton $w={60} $h={50} aria-label="Notifications"><Notice /></IconButton>
          <Peek />
        </Tray>
      </Taskbar>
    </Desktop>
  );
}
